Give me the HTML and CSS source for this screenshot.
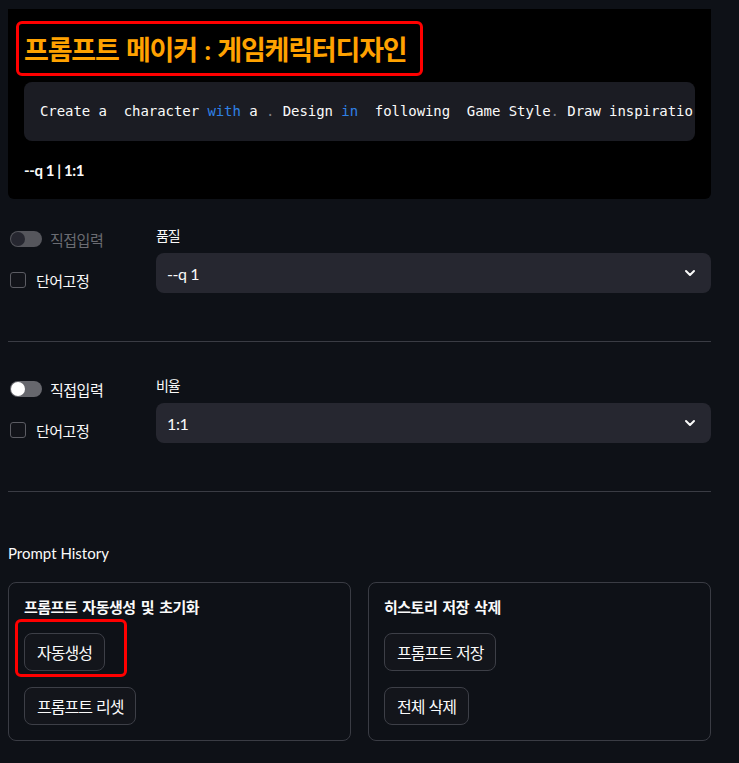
FILE: index.html
```html
<!DOCTYPE html>
<html lang="ko">
<head>
<meta charset="utf-8">
<title>프롬프트 메이커</title>
<link rel="stylesheet" href="styles.css">
</head>
<body>
<main class="app">
  <section class="hero">
    <h1 class="title">프롬프트 메이커 : 게임케릭터디자인</h1>
    <div class="code"><code>Create a  character <span class="kw">with</span> a <span class="punct">.</span> Design <span class="kw">in</span>  following  Game Style<span class="punct">.</span> Draw inspiratio</code></div>
    <p class="params">--q 1 | 1:1</p>
  </section>

  <section class="opt">
    <div class="opt-left">
      <div class="toggle is-disabled"><span class="track"><span class="knob"></span></span><span class="tlabel">직접입력</span></div>
      <div class="check"><span class="box"></span><span class="clabel">단어고정</span></div>
    </div>
    <div class="opt-right">
      <div class="lbl">품질</div>
      <div class="select"><span class="sval">--q 1</span><svg class="chev" width="12" height="8" viewBox="0 0 12 8"><path d="M2 2 L6 6 L10 2" fill="none" stroke="#fafafa" stroke-width="2" stroke-linecap="round" stroke-linejoin="round"/></svg></div>
    </div>
  </section>
  <hr class="divider">

  <section class="opt opt-second">
    <div class="opt-left">
      <div class="toggle"><span class="track"><span class="knob"></span></span><span class="tlabel">직접입력</span></div>
      <div class="check"><span class="box"></span><span class="clabel">단어고정</span></div>
    </div>
    <div class="opt-right">
      <div class="lbl">비율</div>
      <div class="select"><span class="sval">1:1</span><svg class="chev" width="12" height="8" viewBox="0 0 12 8"><path d="M2 2 L6 6 L10 2" fill="none" stroke="#fafafa" stroke-width="2" stroke-linecap="round" stroke-linejoin="round"/></svg></div>
    </div>
  </section>
  <hr class="divider">

  <h2 class="hist">Prompt History</h2>
  <div class="cards">
    <div class="card">
      <h3 class="card-title">프롬프트 자동생성 및 초기화</h3>
      <div class="btns">
        <span class="mark"><button class="btn">자동생성</button></span>
        <button class="btn">프롬프트 리셋</button>
      </div>
    </div>
    <div class="card">
      <h3 class="card-title">히스토리 저장 삭제</h3>
      <div class="btns">
        <button class="btn">프롬프트 저장</button>
        <button class="btn">전체 삭제</button>
      </div>
    </div>
  </div>
</main>
</body>
</html>
```

FILE: styles.css
```css
* { box-sizing: border-box; }

html, body {
  margin: 0;
  padding: 0;
  background: #0e1117;
}

body {
  color: #fafafa;
  font-family: "Lato", "Noto Sans CJK KR", sans-serif;
  font-size: 15px;
}

.app {
  width: 703px;
  margin-left: 8px;
  padding-top: 9px;
}

/* hero */
.hero {
  background: #000;
  height: 190px;
  border-radius: 0 0 6px 6px;
  padding: 12px 16px 0 8px;
  display: flex;
  flex-direction: column;
  align-items: flex-start;
}

.title {
  margin: 0;
  height: 55px;
  border: 3px solid #ff0000;
  border-radius: 6px;
  padding: 0 14px 0 5px;
  display: flex;
  align-items: center;
  color: #ffa200;
  font-size: 27px;
  font-weight: 700;
  letter-spacing: -1.2px;
  word-spacing: 2px;
  white-space: nowrap;
}

.code {
  margin: 6px 0 0 8px;
  align-self: stretch;
  height: 59px;
  background: #1b1c23;
  border-radius: 8px;
  padding: 0 0 2px 16px;
  display: flex;
  align-items: center;
  overflow: hidden;
}

.code code {
  font-family: "DejaVu Sans Mono", monospace;
  font-size: 14px;
  white-space: pre;
  color: #fafafa;
  letter-spacing: -0.06px;
}

.code .kw { color: #2f80e6; }
.code .punct { color: #7d7f87; }

.params {
  margin: 19px 0 0 8px;
  line-height: 20px;
  font-size: 15px;
  font-weight: 700;
  letter-spacing: -0.4px;
}

/* option rows */
.opt {
  display: grid;
  grid-template-columns: 132px 1fr;
  column-gap: 16px;
  margin-top: 27px;
}

.opt-second { margin-top: 34px; }

.opt-left {
  display: flex;
  flex-direction: column;
  padding-top: 1px;
}

.toggle, .check {
  display: flex;
  align-items: center;
  height: 24px;
}

.check { margin-top: 17px; }

.track {
  position: relative;
  width: 32px;
  height: 16px;
  border-radius: 8px;
  background: #66676d;
  margin-left: 2px;
  flex: none;
}

.knob {
  position: absolute;
  left: 1px;
  top: 1px;
  width: 14px;
  height: 14px;
  border-radius: 50%;
  background: #ffffff;
}

.is-disabled .track { background: #55565c; }
.is-disabled .knob { background: #262730; }
.is-disabled .tlabel { color: #6b6c72; }

.tlabel, .clabel {
  font-size: 15px;
  letter-spacing: -0.5px;
  white-space: nowrap;
}

.tlabel { margin-left: 8px; }

.box {
  width: 16px;
  height: 16px;
  margin-left: 2px;
  border: 1px solid #5b5c63;
  border-radius: 3px;
  background: #12141a;
  flex: none;
}

.clabel { margin-left: 10px; }

.lbl {
  height: 20px;
  line-height: 20px;
  font-size: 14px;
  letter-spacing: -1.2px;
  margin-bottom: 7px;
}

.select {
  height: 40px;
  background: #262730;
  border-radius: 8px;
  padding: 0 15px 0 11px;
  display: flex;
  align-items: center;
  justify-content: space-between;
}

.sval {
  font-size: 16px;
  letter-spacing: -0.4px;
}

.chev { display: block; }

.divider {
  margin: 48px 0 0;
  border: 0;
  height: 1px;
  background: #3a3c44;
}

/* history */
.hist {
  margin: 51px 0 0;
  font-size: 15px;
  font-weight: 400;
  line-height: 20px;
}

.cards {
  display: grid;
  grid-template-columns: 1fr 1fr;
  column-gap: 17px;
  margin-top: 19px;
}

.card {
  border: 1px solid #3a3c44;
  border-radius: 8px;
  padding: 14px 15px 15px;
  height: 159px;
}

.card-title {
  margin: 0;
  font-size: 15px;
  font-weight: 700;
  line-height: 20px;
  letter-spacing: -0.5px;
  word-spacing: 2px;
  white-space: nowrap;
}

.btns {
  display: flex;
  flex-direction: column;
  align-items: flex-start;
  gap: 16px;
  margin-top: 16px;
}

.btn {
  height: 38px;
  padding: 0 12px;
  border: 1px solid #3d3f47;
  border-radius: 8px;
  background: #13151b;
  color: #fafafa;
  font-family: "Lato", "Noto Sans CJK KR", sans-serif;
  font-size: 16px;
  letter-spacing: -1px;
  word-spacing: 1px;
  white-space: nowrap;
  display: block;
}

.mark {
  position: relative;
  display: block;
}

.mark::after {
  content: "";
  position: absolute;
  top: -14px;
  left: -9px;
  right: -22px;
  bottom: -6px;
  border: 3px solid #ff0000;
  border-radius: 6px;
  pointer-events: none;
}
```
